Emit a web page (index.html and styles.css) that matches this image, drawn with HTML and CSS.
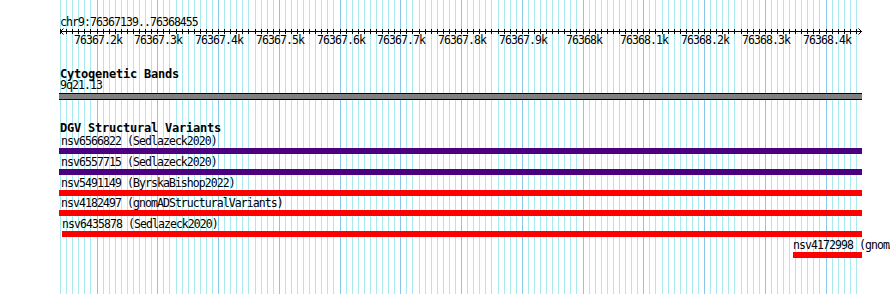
FILE: index.html
```html
<!DOCTYPE html>
<html lang="en">
<head>
    <meta charset="UTF-8">
    <title>Genome View</title>
    <link rel="stylesheet" href="styles.css">
</head>
<body>
    <div class="view">
        <svg class="grid" id="grid" width="890" height="294"></svg>

        <div class="content">
            <svg class="ruler" id="ruler" width="890" height="50">
                <text class="loc" x="60" y="26">chr9:76367139..76368455</text>
            </svg>

            <div class="track band-track">
                <div class="track-title">Cytogenetic Bands</div>
                <div class="label">9q21.13</div>
                <div class="band"></div>
            </div>

            <div class="track dgv-track">
                <div class="track-title">DGV Structural Variants</div>
                <div id="features"></div>
            </div>
        </div>
    </div>

    <script>
        const START = 76367139;
        const END = 76368455;
        const X0 = 60;
        const SCALE = 0.6075;
        const NS = 'http://www.w3.org/2000/svg';

        function px(pos) {
            return X0 + (pos - START) * SCALE;
        }

        function el(name, attrs) {
            const node = document.createElementNS(NS, name);
            for (const k in attrs) node.setAttribute(k, attrs[k]);
            return node;
        }

        // grid lines and ruler ticks
        const grid = document.getElementById('grid');
        const ruler = document.getElementById('ruler');

        ruler.appendChild(el('line', { x1: 60, y1: 31.5, x2: 862, y2: 31.5, class: 'axis' }));
        ruler.appendChild(el('polyline', { points: '63.5,28.5 60.5,31.5 63.5,34.5', class: 'axis' }));
        ruler.appendChild(el('polyline', { points: '858.5,28.5 861.5,31.5 858.5,34.5', class: 'axis' }));

        for (let p = Math.ceil(START / 10) * 10; p <= END; p += 10) {
            const x = Math.floor(px(p)) + 0.5;
            const major = p % 100 === 0;
            grid.appendChild(el('line', { x1: x, y1: 0, x2: x, y2: 294, class: major ? 'major' : 'minor' }));
            ruler.appendChild(el('line', { x1: x, y1: 29, x2: x, y2: 34, class: 'axis' }));
            if (major) {
                const t = el('text', { x: x + 0.5, y: 44, class: 'tick-label' });
                // 76368000 -> "76368k", 76367200 -> "76367.2k"
                t.textContent = (p / 1000) + 'k';
                ruler.appendChild(t);
            }
        }

        // structural variants
        const variants = [
            { name: 'nsv6566822', study: 'Sedlazeck2020', start: 76367137, end: 76368459, color: 'loss' },
            { name: 'nsv6557715', study: 'Sedlazeck2020', start: 76367137, end: 76368459, color: 'loss' },
            { name: 'nsv5491149', study: 'ByrskaBishop2022', start: 76367137, end: 76368459, color: 'gain' },
            { name: 'nsv4182497', study: 'gnomADStructuralVariants', start: 76367137, end: 76368459, color: 'gain' },
            { name: 'nsv6435878', study: 'Sedlazeck2020', start: 76367142, end: 76368459, color: 'gain' },
            { name: 'nsv4172998', study: 'gnomADStructuralVariants', start: 76368346, end: 76368459, color: 'gain' }
        ];

        const features = document.getElementById('features');
        variants.forEach(v => {
            const left = Math.round(px(v.start));
            const right = Math.round(px(v.end));
            const row = document.createElement('div');
            row.className = 'feature';
            row.style.marginLeft = (left - 60) + 'px';
            row.innerHTML = `
                <div class="label" style="margin-left: ${Math.max(0, 61 - left)}px">${v.name} (${v.study})</div>
                <div class="bar ${v.color}" style="width: ${right - left}px"></div>
            `;
            features.appendChild(row);
        });
    </script>
</body>
</html>
```

FILE: styles.css
```css
* {
    margin: 0;
    padding: 0;
    box-sizing: border-box;
}

body {
    background-color: #fff;
    color: #000;
    overflow: hidden;
    font-family: 'DejaVu Sans Mono', monospace;
}

.view {
    position: relative;
    width: 890px;
    height: 294px;
    overflow: hidden;
}

.grid {
    position: absolute;
    top: 0;
    left: 0;
}

.grid .minor {
    stroke: #a8eaf0;
    stroke-width: 1;
}

.grid .major {
    stroke: #88c6ec;
    stroke-width: 1;
}

.content {
    position: relative;
}

.ruler {
    display: block;
}

.ruler .axis {
    stroke: #000;
    stroke-width: 1;
    fill: none;
}

.loc,
.tick-label {
    font-family: 'DejaVu Sans Mono', monospace;
    font-size: 11.5px;
    letter-spacing: -0.93px;
    fill: #000;
}

.tick-label {
    text-anchor: middle;
}

.track {
    padding-left: 60px;
    white-space: nowrap;
}

.track-title {
    font-weight: bold;
    font-size: 12px;
    line-height: 12px;
    letter-spacing: -0.22px;
}

.label {
    font-size: 11.5px;
    line-height: 11px;
    letter-spacing: -0.93px;
}

.band-track {
    margin-top: 18px;
}

.band {
    margin-top: 2px;
    margin-left: -1px;
    width: 803px;
    height: 7px;
    background-color: #808080;
    border-top: 1px solid #000;
    border-bottom: 1px solid #000;
}

.dgv-track {
    margin-top: 22px;
}

#features {
    padding-top: 2px;
}

.feature {
    margin-bottom: 2.8px;
}

.feature .bar {
    margin-top: 1px;
    height: 6px;
}

.bar.loss {
    background-color: #4b0082;
}

.bar.gain {
    background-color: #ff0000;
}
```
